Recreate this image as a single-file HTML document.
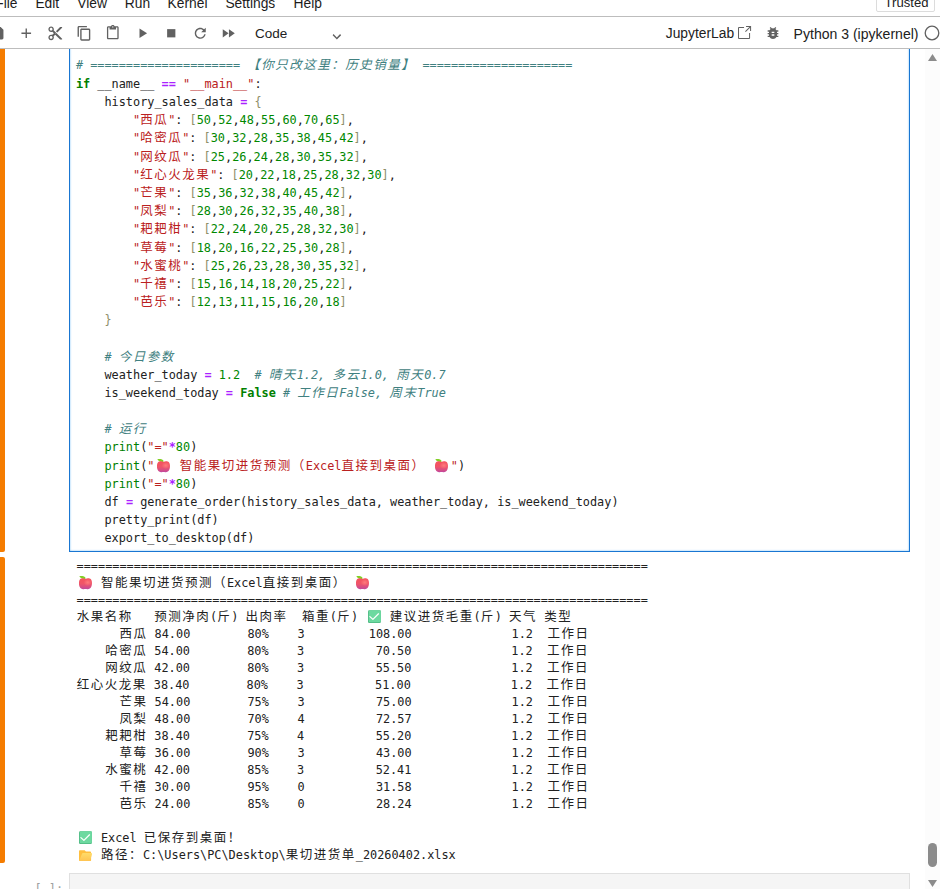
<!DOCTYPE html>
<html lang="zh-CN">
<head>
<meta charset="utf-8">
<title>Notebook</title>
<style>
html,body{margin:0;padding:0;}
body{width:940px;height:889px;position:relative;overflow:hidden;background:#fff;font-family:"Liberation Sans","Noto Sans CJK SC",sans-serif;color:#212121;}
.abs{position:absolute;}
#menubar{left:0;top:0;width:940px;height:16px;border-bottom:1px solid #bdbdbd;background:#fff;}
#menubar span{position:absolute;top:-6.1px;font-size:13.8px;line-height:20px;color:#1c1c1c;white-space:pre;}
#toolbar{left:0;top:17px;width:940px;height:31px;border-bottom:1px solid #bdbdbd;background:#fff;}
#toolbar svg{position:absolute;fill:#616161;}
#toolbar .t{position:absolute;line-height:20px;top:6.84px;color:#212121;white-space:pre;}
#trusted{left:876px;top:-10px;width:57px;height:20px;border:1px solid #dcdcdc;border-radius:2px;background:#fff;}
#trusted span{position:absolute;left:7.6px;top:5.3px;font-size:13.1px;line-height:14px;color:#212121;}
.bar{left:0;width:5px;background:#f57c00;}
#cellclip{left:60px;top:49px;width:860px;height:506px;overflow:hidden;}
#cell{left:9px;top:-10px;width:839px;height:511px;border:1px solid #1976d2;background:#fff;box-shadow:inset 0 0 2px #64b5f6;}
.mono{font-family:"DejaVu Sans Mono","Liberation Mono","Noto Sans CJK SC",monospace;font-size:11.87px;color:#212121;white-space:pre;}
.c{font-family:"Liberation Mono","Noto Sans CJK SC","WenQuanYi Zen Hei",sans-serif;font-size:12.5px;letter-spacing:1.5px;margin-left:.1px;margin-right:-.1px;line-height:0;}
#code{left:75.9px;top:56.8px;}
#code .ln{height:18.18px;line-height:18.18px;}
#code .ln:first-child{position:relative;top:-1px;}
#out{left:76.6px;top:557.5px;}
#out .ol{height:17px;line-height:17px;}
.k{color:#008000;font-weight:bold;}
.o{color:#aa22ff;font-weight:bold;}
.s{color:#ba2121;}
.n{color:#008800;}
.b{color:#8e8e68;}
.bi{color:#008000;}
.cm{color:#408080;font-style:italic;}
.em{display:inline-block;width:13px;height:13.2px;margin:0 1.8px 0 2.4px;vertical-align:-3px;}
#code .em{margin-right:2.8px;}
#sbar{left:925px;top:49px;width:15px;height:840px;background:#fcfcfc;}
#next{left:69px;top:873px;width:839px;height:30px;border:1px solid #e0e0e0;background:#f5f5f5;}
#prompt{left:34.6px;top:882px;color:#a0a0a0;}
</style>
</head>
<body>
<div id="menubar" class="abs">
<span style="left:-4.7px">File</span><span style="left:35.4px">Edit</span><span style="left:77.2px">View</span><span style="left:124.8px">Run</span><span style="left:167.6px">Kernel</span><span style="left:225.4px">Settings</span><span style="left:293.6px">Help</span>
</div>
<div id="trusted" class="abs"><span>Trusted</span></div>
<div id="toolbar" class="abs">
<!-- icons -->
<svg style="left:-11.3px;top:7.75px" width="16.5" height="16.5" viewBox="0 0 24 24"><path d="M17 3H5c-1.11 0-2 .9-2 2v14c0 1.1.89 2 2 2h14c1.1 0 2-.9 2-2V7l-4-4zm-5 16c-1.66 0-3-1.34-3-3s1.34-3 3-3 3 1.34 3 3-1.34 3-3 3zm3-10H5V5h10v4z"/></svg>
<svg style="left:17.65px;top:7.75px" width="16.5" height="16.5" viewBox="0 0 24 24"><path d="M19 13h-6v6h-2v-6H5v-2h6V5h2v6h6v2z"/></svg>
<svg style="left:46.6px;top:7.75px" width="16.5" height="16.5" viewBox="0 0 24 24"><path d="M9.64 7.64c.23-.5.36-1.05.36-1.64 0-2.21-1.79-4-4-4S2 3.79 2 6s1.79 4 4 4c.59 0 1.14-.13 1.64-.36L10 12l-2.36 2.36C7.14 14.13 6.59 14 6 14c-2.21 0-4 1.79-4 4s1.79 4 4 4 4-1.79 4-4c0-.59-.13-1.14-.36-1.64L12 14l7 7h3v-1L9.64 7.64zM6 8c-1.1 0-2-.89-2-2s.9-2 2-2 2 .89 2 2-.9 2-2 2zm0 12c-1.1 0-2-.89-2-2s.9-2 2-2 2 .89 2 2-.9 2-2 2zm6-7.5c-.28 0-.5-.22-.5-.5s.22-.5.5-.5.5.22.5.5-.22.5-.5.5zM19 3l-6 6 2 2 7-7V3z"/></svg>
<svg style="left:75.6px;top:7.75px" width="16.5" height="16.5" viewBox="0 0 18 18"><path d="M11.9,1H3.2C2.4,1,1.7,1.7,1.7,2.5v10.2h1.5V2.5h8.7V1z M14.1,3.9h-8c-0.8,0-1.5,0.7-1.5,1.5v10.2c0,0.8,0.7,1.5,1.5,1.5h8 c0.8,0,1.5-0.7,1.5-1.5V5.4C15.5,4.6,14.9,3.9,14.1,3.9z M14.1,15.5h-8V5.4h8V15.5z"/></svg>
<svg style="left:105.1px;top:8.3px" width="15.6" height="15.6" viewBox="0 0 24 24"><path d="M19 2h-4.18C14.4.84 13.3 0 12 0c-1.3 0-2.4.84-2.82 2H5c-1.1 0-2 .9-2 2v16c0 1.1.9 2 2 2h14c1.1 0 2-.9 2-2V4c0-1.1-.9-2-2-2zm-7 0c.55 0 1 .45 1 1s-.45 1-1 1-1-.45-1-1 .45-1 1-1zm7 18H5V4h2v3h10V4h2v16z"/></svg>
<svg style="left:133.5px;top:7.75px" width="16.5" height="16.5" viewBox="0 0 24 24"><path d="M8 5v14l11-7z"/></svg>
<svg style="left:162.5px;top:7.75px" width="16.5" height="16.5" viewBox="0 0 24 24"><path d="M6 6h12v12H6z"/></svg>
<svg style="left:191.5px;top:7.75px" width="16.5" height="16.5" viewBox="0 0 18 18"><path d="M9 13.5c-2.49 0-4.5-2.01-4.5-4.5S6.51 4.5 9 4.5c1.24 0 2.36.52 3.17 1.33L10 8h5V3l-1.76 1.76C12.15 3.68 10.66 3 9 3 5.69 3 3.01 5.69 3.01 9S5.69 15 9 15c2.97 0 5.43-2.16 5.9-5h-1.52c-.46 2-2.24 3.5-4.38 3.500z"/></svg>
<svg style="left:220.4px;top:7.75px" width="16.5" height="16.5" viewBox="0 0 24 24"><path d="M4 18l8.500-6L4 6v12zm9-12v12l8.500-6L13 6z"/></svg>
<span class="t" style="left:255px;font-size:13.5px">Code</span>
<svg style="left:329.2px;top:11.7px" width="15.6" height="15.6" viewBox="0 0 18 18"><path d="M5.200,5.900L9,9.700l3.800-3.800l1.200,1.200l-4.900,5l-4.900-5L5.200,5.900z"/></svg>
<span class="t" style="left:665.8px;top:6.7px;font-size:13.8px">JupyterLab</span>
<svg style="left:735.9px;top:7.8px" width="16.1" height="16.1" viewBox="0 0 32 32"><path d="M26,28H6a2.0027,2.0027,0,0,1-2-2V6A2.0027,2.0027,0,0,1,6,4H16V6H6V26H26V16h2V26A2.0027,2.0027,0,0,1,26,28Z"/><polygon points="20 2 20 4 26.586 4 18 12.586 19.414 14 28 5.414 28 12 30 12 30 2 20 2"/></svg>
<svg style="left:765.1px;top:7.85px" width="16" height="16" viewBox="0 0 24 24"><path d="M20 8h-2.810c-.45-.78-1.070-1.450-1.820-1.960L17 4.410 15.590 3l-2.170 2.170C12.960 5.060 12.490 5 12 5c-.49 0-.96.060-1.410.17L8.410 3 7 4.410l1.620 1.630C7.880 6.550 7.260 7.220 6.810 8H4v2h2.090c-.05.33-.09.66-.09 1v1H4v2h2v1c0 .34.040.67.090 1H4v2h2.810c1.040 1.790 2.970 3 5.190 3s4.150-1.210 5.190-3H20v-2h-2.090c.05-.33.09-.66.09-1v-1h2v-2h-2v-1c0-.34-.04-.67-.09-1H20V8zm-6 8h-4v-2h4v2zm0-4h-4v-2h4v2z"/></svg>
<span class="t" style="left:793.6px;top:6.6px;font-size:14.05px">Python 3 (ipykernel)</span>
<svg style="left:923px;top:7px" width="18" height="18" viewBox="0 0 18 18"><circle cx="9" cy="9" r="6.800" fill="none" stroke="#616161" stroke-width="1.300"/></svg>
</div>

<div class="abs bar" style="top:49px;height:503px;border-radius:0 0 2px 0"></div>
<div class="abs bar" style="top:557px;height:306px;border-radius:0 2px 2px 0"></div>

<div id="cellclip" class="abs"><div id="cell" class="abs"></div></div>
<div id="code" class="abs mono"><div class="ln"><span class="cm"># ===================== <span class="c">【你只改这里：历史销量】</span> =====================</span></div><div class="ln"><span class="k">if</span> __name__ <span class="o">==</span> <span class="s">"__main__"</span>:</div><div class="ln">    history_sales_data <span class="o">=</span> <span class="b">{</span></div><div class="ln">        <span class="s">"<span class="c">西瓜</span>"</span>: <span class="b">[</span><span class="n">50</span>,<span class="n">52</span>,<span class="n">48</span>,<span class="n">55</span>,<span class="n">60</span>,<span class="n">70</span>,<span class="n">65</span><span class="b">]</span>,</div><div class="ln">        <span class="s">"<span class="c">哈密瓜</span>"</span>: <span class="b">[</span><span class="n">30</span>,<span class="n">32</span>,<span class="n">28</span>,<span class="n">35</span>,<span class="n">38</span>,<span class="n">45</span>,<span class="n">42</span><span class="b">]</span>,</div><div class="ln">        <span class="s">"<span class="c">网纹瓜</span>"</span>: <span class="b">[</span><span class="n">25</span>,<span class="n">26</span>,<span class="n">24</span>,<span class="n">28</span>,<span class="n">30</span>,<span class="n">35</span>,<span class="n">32</span><span class="b">]</span>,</div><div class="ln">        <span class="s">"<span class="c">红心火龙果</span>"</span>: <span class="b">[</span><span class="n">20</span>,<span class="n">22</span>,<span class="n">18</span>,<span class="n">25</span>,<span class="n">28</span>,<span class="n">32</span>,<span class="n">30</span><span class="b">]</span>,</div><div class="ln">        <span class="s">"<span class="c">芒果</span>"</span>: <span class="b">[</span><span class="n">35</span>,<span class="n">36</span>,<span class="n">32</span>,<span class="n">38</span>,<span class="n">40</span>,<span class="n">45</span>,<span class="n">42</span><span class="b">]</span>,</div><div class="ln">        <span class="s">"<span class="c">凤梨</span>"</span>: <span class="b">[</span><span class="n">28</span>,<span class="n">30</span>,<span class="n">26</span>,<span class="n">32</span>,<span class="n">35</span>,<span class="n">40</span>,<span class="n">38</span><span class="b">]</span>,</div><div class="ln">        <span class="s">"<span class="c">耙耙柑</span>"</span>: <span class="b">[</span><span class="n">22</span>,<span class="n">24</span>,<span class="n">20</span>,<span class="n">25</span>,<span class="n">28</span>,<span class="n">32</span>,<span class="n">30</span><span class="b">]</span>,</div><div class="ln">        <span class="s">"<span class="c">草莓</span>"</span>: <span class="b">[</span><span class="n">18</span>,<span class="n">20</span>,<span class="n">16</span>,<span class="n">22</span>,<span class="n">25</span>,<span class="n">30</span>,<span class="n">28</span><span class="b">]</span>,</div><div class="ln">        <span class="s">"<span class="c">水蜜桃</span>"</span>: <span class="b">[</span><span class="n">25</span>,<span class="n">26</span>,<span class="n">23</span>,<span class="n">28</span>,<span class="n">30</span>,<span class="n">35</span>,<span class="n">32</span><span class="b">]</span>,</div><div class="ln">        <span class="s">"<span class="c">千禧</span>"</span>: <span class="b">[</span><span class="n">15</span>,<span class="n">16</span>,<span class="n">14</span>,<span class="n">18</span>,<span class="n">20</span>,<span class="n">25</span>,<span class="n">22</span><span class="b">]</span>,</div><div class="ln">        <span class="s">"<span class="c">芭乐</span>"</span>: <span class="b">[</span><span class="n">12</span>,<span class="n">13</span>,<span class="n">11</span>,<span class="n">15</span>,<span class="n">16</span>,<span class="n">20</span>,<span class="n">18</span><span class="b">]</span></div><div class="ln">    <span class="b">}</span></div><div class="ln"></div><div class="ln">    <span class="cm"># <span class="c">今日参数</span></span></div><div class="ln">    weather_today <span class="o">=</span> <span class="n">1.2</span>  <span class="cm"># <span class="c">晴天</span>1.2, <span class="c">多云</span>1.0, <span class="c">雨天</span>0.7</span></div><div class="ln">    is_weekend_today <span class="o">=</span> <span class="k">False</span> <span class="cm"># <span class="c">工作日</span>False, <span class="c">周末</span>True</span></div><div class="ln"></div><div class="ln">    <span class="cm"># <span class="c">运行</span></span></div><div class="ln">    <span class="bi">print</span>(<span class="s">"="</span><span class="o">*</span><span class="n">80</span>)</div><div class="ln">    <span class="bi">print</span>(<span class="s">"</span><svg class="em" viewBox="0 0 13 13.2"><defs><linearGradient id="ag" x1="0" y1="0" x2="0" y2="1"><stop offset="0" stop-color="#f6525c"/><stop offset="0.5" stop-color="#ef5569"/><stop offset="0.78" stop-color="#d94e82"/><stop offset="1" stop-color="#c0499f"/></linearGradient><radialGradient id="ah" cx="0.68" cy="0.38" r="0.32"><stop offset="0" stop-color="#ff7c7e" stop-opacity="0.95"/><stop offset="1" stop-color="#ff7c7e" stop-opacity="0"/></radialGradient></defs><path d="M0.300 0.350 C1.600 -0.100 4.800 -0.200 6.200 1.300 C6.500 1.700 6.500 2.400 6.400 2.900 C4.200 3.100 1.400 2.600 0.300 0.350Z" fill="#82cf25"/><path d="M6.450 2.900 C7.700 2.100 10.600 1.900 11.900 3.300 C13.300 4.900 13.200 8.800 12.400 10.600 C11.600 12.500 10 13.300 8.300 13.150 C7.500 13.050 7 12.900 6.450 12.900 C5.900 12.900 5.400 13.050 4.600 13.150 C2.900 13.300 1.300 12.500 0.500 10.600 C-0.300 8.800 -0.400 4.900 1 3.300 C2.300 1.900 5.200 2.100 6.450 2.900Z" fill="url(#ag)"/><path d="M6.450 2.900 C7.700 2.100 10.600 1.900 11.900 3.300 C13.300 4.900 13.200 8.800 12.400 10.600 C11.600 12.500 10 13.300 8.300 13.150 C7.500 13.050 7 12.900 6.450 12.900 C5.900 12.900 5.400 13.050 4.600 13.150 C2.900 13.300 1.300 12.500 0.500 10.600 C-0.300 8.800 -0.400 4.900 1 3.300 C2.300 1.900 5.200 2.100 6.450 2.900Z" fill="url(#ah)"/></svg><span class="s"> <span class="c">智能果切进货预测（</span>Excel<span class="c">直接到桌面）</span> </span><svg class="em" viewBox="0 0 13 13.2"><defs><linearGradient id="ag2" x1="0" y1="0" x2="0" y2="1"><stop offset="0" stop-color="#f6525c"/><stop offset="0.5" stop-color="#ef5569"/><stop offset="0.78" stop-color="#d94e82"/><stop offset="1" stop-color="#c0499f"/></linearGradient><radialGradient id="ah2" cx="0.68" cy="0.38" r="0.32"><stop offset="0" stop-color="#ff7c7e" stop-opacity="0.95"/><stop offset="1" stop-color="#ff7c7e" stop-opacity="0"/></radialGradient></defs><path d="M0.300 0.350 C1.600 -0.100 4.800 -0.200 6.200 1.300 C6.500 1.700 6.500 2.400 6.400 2.900 C4.200 3.100 1.400 2.600 0.300 0.350Z" fill="#82cf25"/><path d="M6.450 2.900 C7.700 2.100 10.600 1.900 11.900 3.300 C13.300 4.900 13.200 8.800 12.400 10.600 C11.600 12.500 10 13.300 8.300 13.150 C7.500 13.050 7 12.900 6.450 12.900 C5.900 12.900 5.400 13.050 4.600 13.150 C2.900 13.300 1.300 12.500 0.500 10.600 C-0.300 8.800 -0.400 4.900 1 3.300 C2.300 1.900 5.200 2.100 6.450 2.900Z" fill="url(#ag2)"/><path d="M6.450 2.900 C7.700 2.100 10.600 1.900 11.900 3.300 C13.300 4.900 13.200 8.800 12.400 10.600 C11.600 12.500 10 13.300 8.300 13.150 C7.500 13.050 7 12.900 6.450 12.900 C5.900 12.900 5.400 13.050 4.600 13.150 C2.900 13.300 1.300 12.500 0.500 10.600 C-0.300 8.800 -0.400 4.900 1 3.300 C2.300 1.900 5.200 2.100 6.450 2.900Z" fill="url(#ah2)"/></svg><span class="s">"</span>)</div><div class="ln">    <span class="bi">print</span>(<span class="s">"="</span><span class="o">*</span><span class="n">80</span>)</div><div class="ln">    df <span class="o">=</span> generate_order(history_sales_data, weather_today, is_weekend_today)</div><div class="ln">    pretty_print(df)</div><div class="ln">    export_to_desktop(df)</div></div>
<div id="out" class="abs mono"><div class="ol">================================================================================</div><div class="ol"><svg class="em" viewBox="0 0 13 13.2"><defs><linearGradient id="ag3" x1="0" y1="0" x2="0" y2="1"><stop offset="0" stop-color="#f6525c"/><stop offset="0.5" stop-color="#ef5569"/><stop offset="0.78" stop-color="#d94e82"/><stop offset="1" stop-color="#c0499f"/></linearGradient><radialGradient id="ah3" cx="0.68" cy="0.38" r="0.32"><stop offset="0" stop-color="#ff7c7e" stop-opacity="0.95"/><stop offset="1" stop-color="#ff7c7e" stop-opacity="0"/></radialGradient></defs><path d="M0.300 0.350 C1.600 -0.100 4.800 -0.200 6.200 1.300 C6.500 1.700 6.500 2.400 6.400 2.900 C4.200 3.100 1.400 2.600 0.300 0.350Z" fill="#82cf25"/><path d="M6.450 2.900 C7.700 2.100 10.600 1.900 11.900 3.300 C13.300 4.900 13.200 8.800 12.400 10.600 C11.600 12.500 10 13.300 8.300 13.150 C7.500 13.050 7 12.900 6.450 12.900 C5.900 12.900 5.400 13.050 4.600 13.150 C2.900 13.300 1.300 12.500 0.500 10.600 C-0.300 8.800 -0.400 4.900 1 3.300 C2.300 1.900 5.200 2.100 6.450 2.900Z" fill="url(#ag3)"/><path d="M6.450 2.900 C7.700 2.100 10.600 1.900 11.900 3.300 C13.300 4.900 13.200 8.800 12.400 10.600 C11.600 12.500 10 13.300 8.300 13.150 C7.500 13.050 7 12.900 6.450 12.900 C5.900 12.900 5.400 13.050 4.600 13.150 C2.900 13.300 1.300 12.500 0.500 10.600 C-0.300 8.800 -0.400 4.900 1 3.300 C2.300 1.900 5.200 2.100 6.450 2.900Z" fill="url(#ah3)"/></svg> <span class="c">智能果切进货预测（</span>Excel<span class="c">直接到桌面）</span> <svg class="em" viewBox="0 0 13 13.2"><defs><linearGradient id="ag4" x1="0" y1="0" x2="0" y2="1"><stop offset="0" stop-color="#f6525c"/><stop offset="0.5" stop-color="#ef5569"/><stop offset="0.78" stop-color="#d94e82"/><stop offset="1" stop-color="#c0499f"/></linearGradient><radialGradient id="ah4" cx="0.68" cy="0.38" r="0.32"><stop offset="0" stop-color="#ff7c7e" stop-opacity="0.95"/><stop offset="1" stop-color="#ff7c7e" stop-opacity="0"/></radialGradient></defs><path d="M0.300 0.350 C1.600 -0.100 4.800 -0.200 6.200 1.300 C6.500 1.700 6.500 2.400 6.400 2.900 C4.200 3.100 1.400 2.600 0.300 0.350Z" fill="#82cf25"/><path d="M6.450 2.900 C7.700 2.100 10.600 1.900 11.900 3.300 C13.300 4.900 13.200 8.800 12.400 10.600 C11.600 12.500 10 13.300 8.300 13.150 C7.500 13.050 7 12.900 6.450 12.900 C5.900 12.900 5.400 13.050 4.600 13.150 C2.900 13.300 1.300 12.500 0.500 10.600 C-0.300 8.800 -0.400 4.900 1 3.300 C2.300 1.900 5.200 2.100 6.450 2.900Z" fill="url(#ag4)"/><path d="M6.450 2.900 C7.700 2.100 10.600 1.900 11.900 3.300 C13.300 4.900 13.200 8.800 12.400 10.600 C11.600 12.500 10 13.300 8.300 13.150 C7.500 13.050 7 12.900 6.450 12.900 C5.900 12.900 5.400 13.050 4.600 13.150 C2.900 13.300 1.300 12.500 0.500 10.600 C-0.300 8.800 -0.400 4.900 1 3.300 C2.300 1.900 5.200 2.100 6.450 2.900Z" fill="url(#ah4)"/></svg></div><div class="ol">================================================================================</div><div class="ol"><span class="c">水果名称</span>   <span class="c">预测净肉</span>(<span class="c">斤</span>) <span class="c">出肉率</span>  <span class="c">箱重</span>(<span class="c">斤</span>) <svg class="em" viewBox="0 0 13 13.2"><rect x="0" y="0.200" width="12.900" height="12.900" rx="1.300" fill="#4db681"/><rect x="0.700" y="0.200" width="12.200" height="12.100" rx="1.200" fill="#6dd9a0"/><path d="M1.900 6.600 L4.900 9.400 L10.500 3.800" fill="none" stroke="#fff" stroke-width="1.250" stroke-linecap="round" stroke-linejoin="round"/></svg> <span class="c">建议进货毛重</span>(<span class="c">斤</span>) <span class="c">天气</span> <span class="c">类型</span></div><div class="ol">      <span class="c">西瓜</span> 84.00        80%    3         108.00              1.2  <span class="c">工作日</span></div><div class="ol">    <span class="c">哈密瓜</span> 54.00        80%    3          70.50              1.2  <span class="c">工作日</span></div><div class="ol">    <span class="c">网纹瓜</span> 42.00        80%    3          55.50              1.2  <span class="c">工作日</span></div><div class="ol"><span class="c">红心火龙果</span> 38.40        80%    3          51.00              1.2  <span class="c">工作日</span></div><div class="ol">      <span class="c">芒果</span> 54.00        75%    3          75.00              1.2  <span class="c">工作日</span></div><div class="ol">      <span class="c">凤梨</span> 48.00        70%    4          72.57              1.2  <span class="c">工作日</span></div><div class="ol">    <span class="c">耙耙柑</span> 38.40        75%    4          55.20              1.2  <span class="c">工作日</span></div><div class="ol">      <span class="c">草莓</span> 36.00        90%    3          43.00              1.2  <span class="c">工作日</span></div><div class="ol">    <span class="c">水蜜桃</span> 42.00        85%    3          52.41              1.2  <span class="c">工作日</span></div><div class="ol">      <span class="c">千禧</span> 30.00        95%    0          31.58              1.2  <span class="c">工作日</span></div><div class="ol">      <span class="c">芭乐</span> 24.00        85%    0          28.24              1.2  <span class="c">工作日</span></div><div class="ol"></div><div class="ol"><svg class="em" viewBox="0 0 13 13.2"><rect x="0" y="0.200" width="12.900" height="12.900" rx="1.300" fill="#4db681"/><rect x="0.700" y="0.200" width="12.200" height="12.100" rx="1.200" fill="#6dd9a0"/><path d="M1.900 6.600 L4.900 9.400 L10.500 3.800" fill="none" stroke="#fff" stroke-width="1.250" stroke-linecap="round" stroke-linejoin="round"/></svg> Excel <span class="c">已保存到桌面！</span></div><div class="ol"><svg class="em" viewBox="0 0 13 13.2"><defs><linearGradient id="fg" x1="0" y1="0" x2="0" y2="1"><stop offset="0" stop-color="#ffdc6a"/><stop offset="1" stop-color="#ffc452"/></linearGradient></defs><path d="M0 3.200 C0 2.650 0.450 2.300 1 2.300 H5.200 C5.600 2.300 5.900 2.450 6.150 2.750 L6.900 3.600 H10.900 C11.600 3.600 12.100 4.100 12.100 4.800 V12 C12.100 12.600 11.700 13.100 11 13.100 H1.100 C0.450 13.100 0 12.650 0 12Z" fill="#ffbf3f"/><path d="M2.900 5.900 C3.100 5.300 3.500 5 4.100 5 H12.100 C12.800 5 13.200 5.600 13 6.250 L11.300 12.200 C11.100 12.800 10.700 13.100 10.100 13.100 H1.200 C0.600 13.100 0.350 12.600 0.550 12Z" fill="url(#fg)"/></svg> <span class="c">路径：</span>C:\Users\PC\Desktop\<span class="c">果切进货单</span>_20260402.xlsx</div></div>

<div id="next" class="abs"></div>
<div id="prompt" class="abs mono">[ ]:</div>

<div id="sbar" class="abs">
<svg class="abs" style="left:3px;top:5px" width="9" height="7" viewBox="0 0 9 7"><path d="M4.500 0 L9 7 H0Z" fill="#8b8b8b"/></svg>
<div class="abs" style="left:3px;top:794px;width:9px;height:24px;border-radius:4.500px;background:#8b8b8b"></div>
<svg class="abs" style="left:3px;top:831px" width="9" height="7" viewBox="0 0 9 7"><path d="M0 0 H9 L4.500 7Z" fill="#8b8b8b"/></svg>
</div>
<!-- toolbar/menubar on top of cell -->
</body>
</html>
